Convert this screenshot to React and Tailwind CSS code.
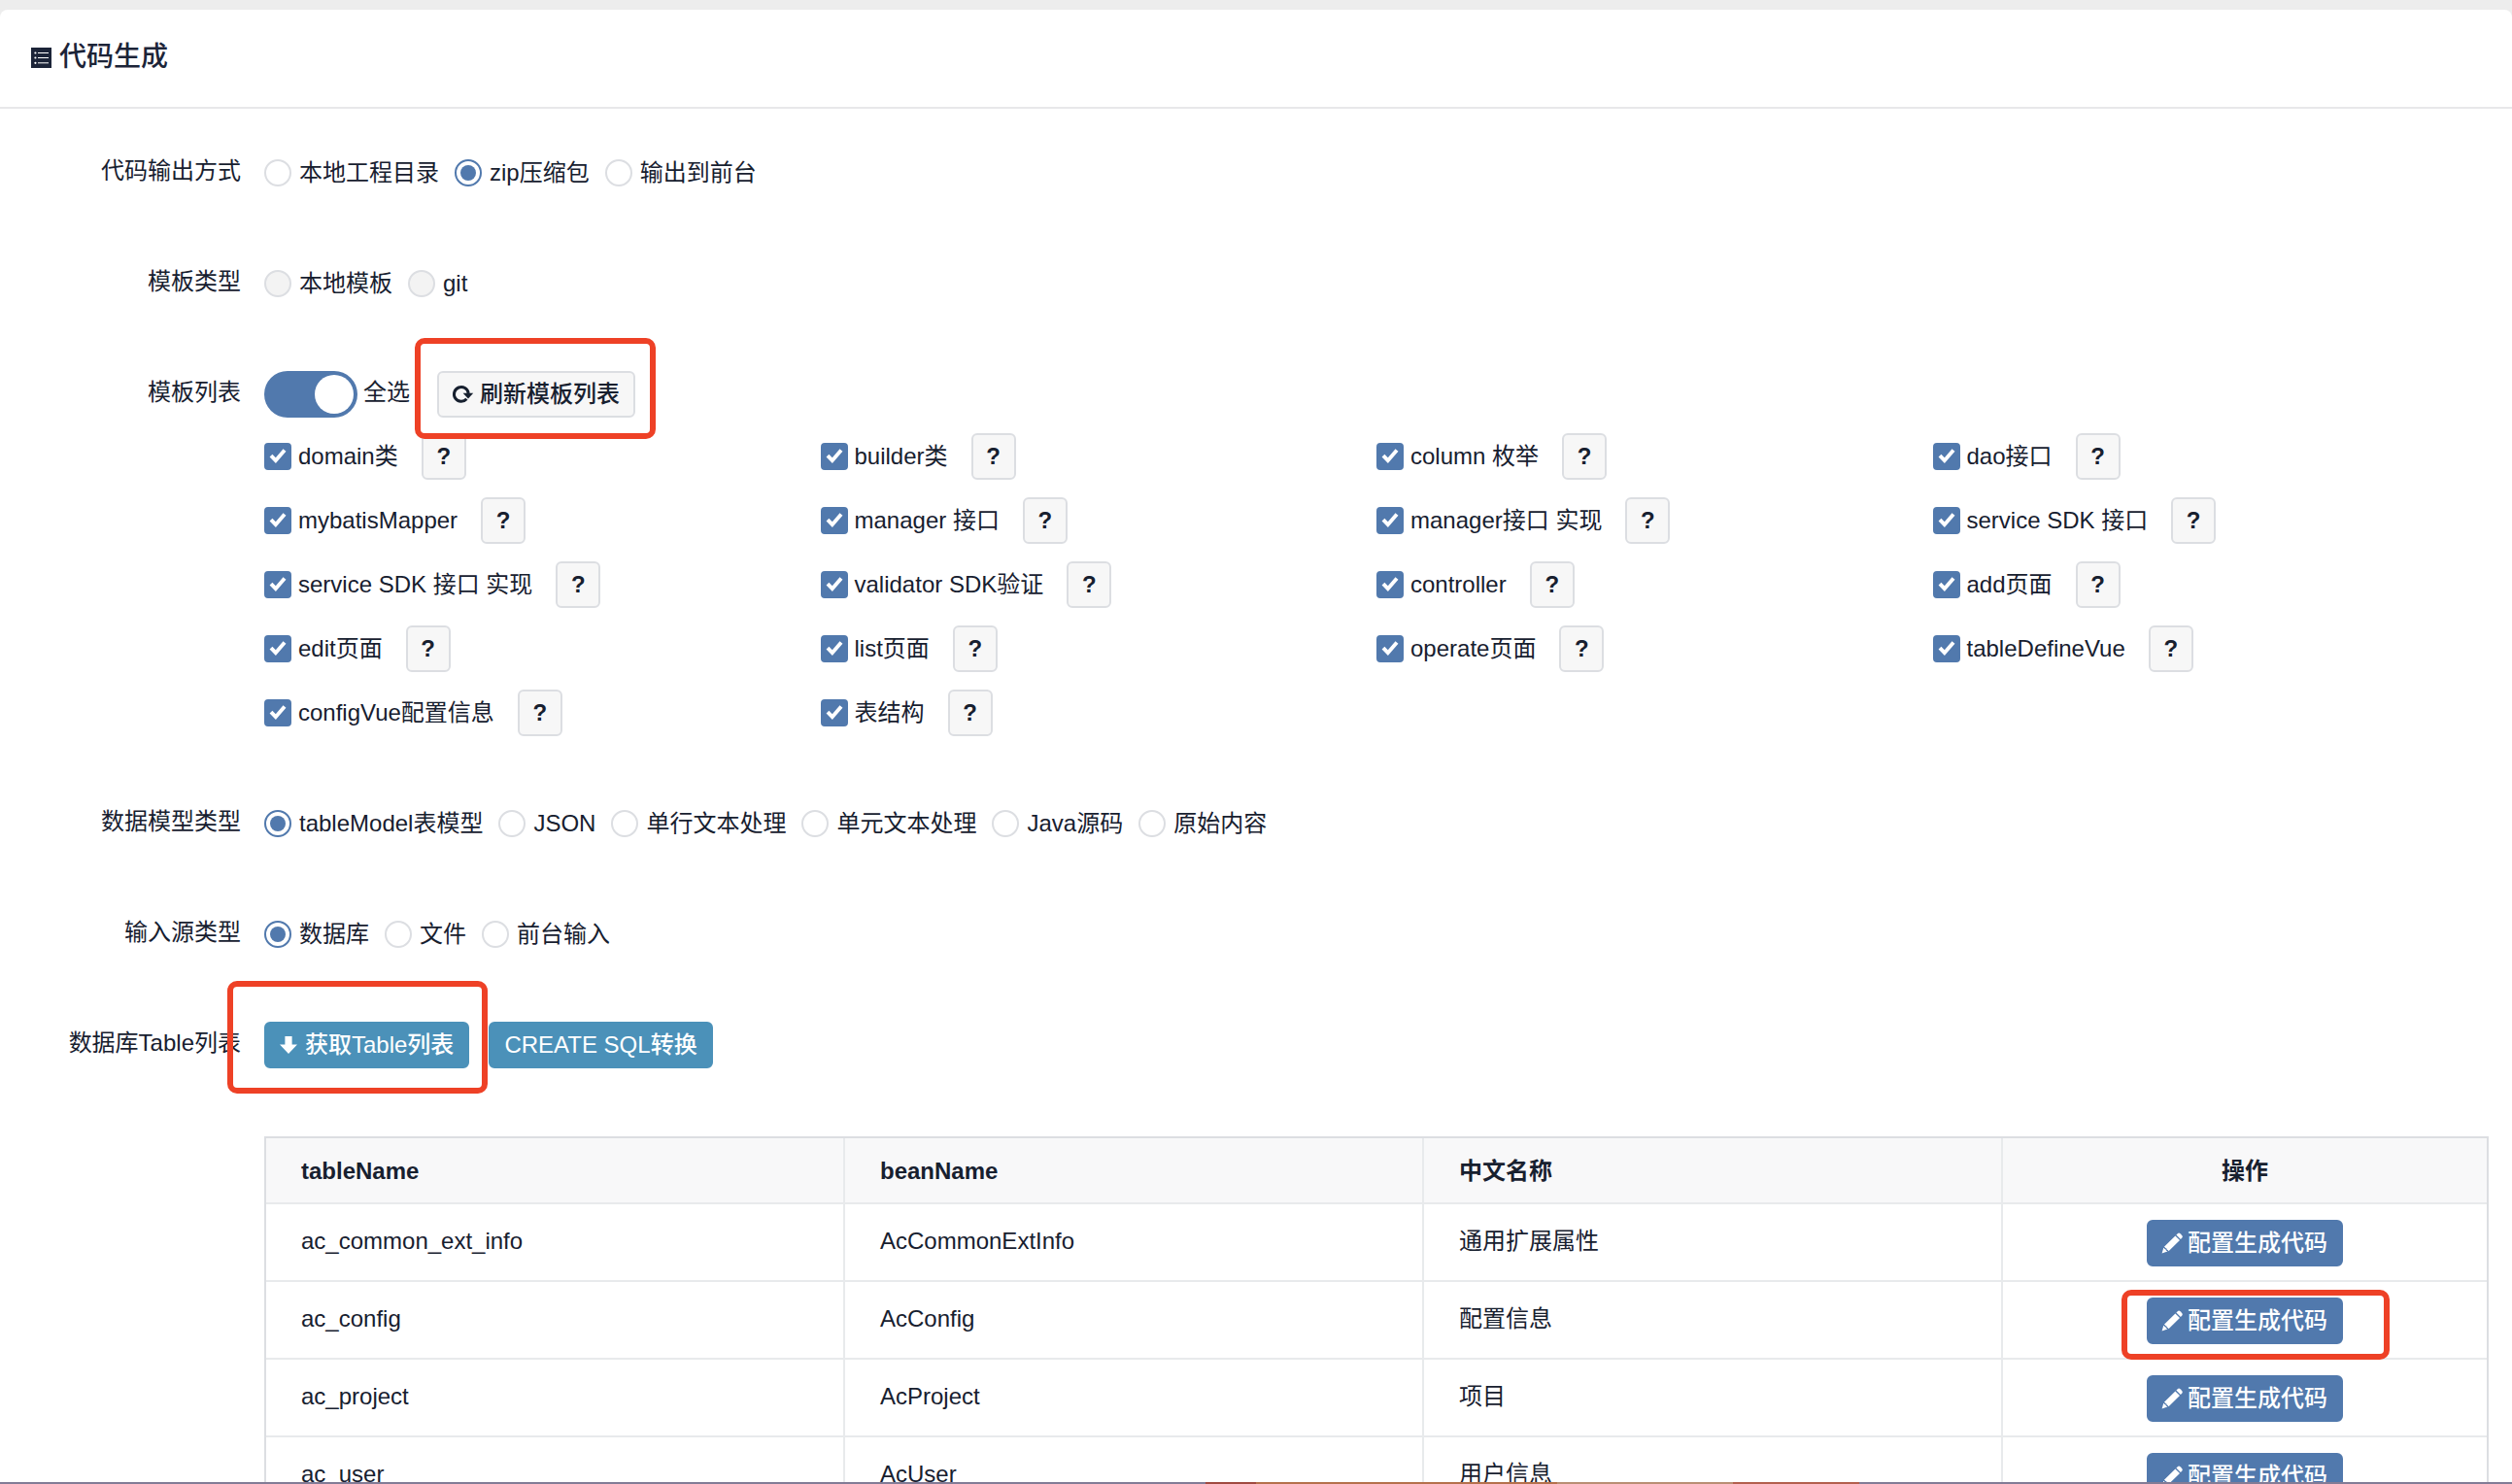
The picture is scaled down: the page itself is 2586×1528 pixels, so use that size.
import clsx from "clsx";

const templates = [
  "domain类",
  "builder类",
  "column 枚举",
  "dao接口",
  "mybatisMapper",
  "manager 接口",
  "manager接口 实现",
  "service SDK 接口",
  "service SDK 接口 实现",
  "validator SDK验证",
  "controller",
  "add页面",
  "edit页面",
  "list页面",
  "operate页面",
  "tableDefineVue",
  "configVue配置信息",
  "表结构",
];

const tables = [
  { tableName: "ac_common_ext_info", beanName: "AcCommonExtInfo", title: "通用扩展属性" },
  { tableName: "ac_config", beanName: "AcConfig", title: "配置信息", marked: true },
  { tableName: "ac_project", beanName: "AcProject", title: "项目" },
  { tableName: "ac_user", beanName: "AcUser", title: "用户信息" },
];

function ListBoxIcon() {
  return (
    <svg viewBox="0 0 21 21" className="size-[21px]" aria-hidden="true">
      <rect width="21" height="21" fill="#1c2438" />
      <g fill="#fff">
        <circle cx="4.4" cy="5.5" r="1.1" />
        <circle cx="4.4" cy="10.5" r="1.1" />
        <circle cx="4.4" cy="15.8" r="1.1" />
        <rect x="7" y="5" width="11" height="1" />
        <rect x="7" y="10" width="11" height="1" />
        <rect x="7" y="15.3" width="11" height="1" />
      </g>
    </svg>
  );
}

function RefreshIcon() {
  return (
    <svg viewBox="0 0 20 20" className="size-5 overflow-visible" aria-hidden="true">
      <path d="M14.4 14.8A7.4 7.4 0 1 1 16.2 9" fill="none" stroke="currentColor" strokeWidth="3" />
      <path d="M10.6 8.8H21.2L16 14.6z" fill="currentColor" />
    </svg>
  );
}

function ArrowDownIcon() {
  return (
    <svg viewBox="0 0 20 20" className="size-5" aria-hidden="true">
      <path d="M5.4 1h7.2v8.6H18L9 19 0 9.6h5.4z" fill="currentColor" />
    </svg>
  );
}

function PencilIcon() {
  return (
    <svg viewBox="0 0 20 20" className="size-5 overflow-visible" aria-hidden="true">
      <path d="M15.8.2q1.3-1.2 2.700.1l1.700 1.700q1.200 1.300.1 2.500l-1.400 1.400-4.500-4.300z" fill="currentColor" />
      <path d="M13.400 2.500l4.600 4.400L6.500 18.200q-.4-1.300-1.700-1.400 0-1.700-1.600-1.800-.2-1.100-1.300-1.300z" fill="currentColor" />
      <path d="M1.300 14.800q.9.2 1.100 1.200 1.600.1 1.600 1.700 1 .1 1.400.9L-.4 20.500z" fill="currentColor" />
    </svg>
  );
}

// Red outline drawn over the control that the guide points to
function Marker({ className }) {
  return (
    <span
      aria-hidden="true"
      className={clsx("pointer-events-none absolute z-10 rounded-[10px] border-6 border-[#ee4126]", className)}
    />
  );
}

function Button({ variant = "default", className, children }) {
  return (
    <button
      type="button"
      className={clsx(
        "inline-flex h-12 items-center justify-center rounded-md border-2 whitespace-nowrap",
        variant === "default" && "gap-2 border-[#dcdee2] bg-[#f7f7f7]",
        variant === "primary" && "gap-1.5 border-[#5179ad] bg-[#5179ad] text-white",
        variant === "info" && "gap-1.5 border-[#4b91b9] bg-[#4b91b9] text-white",
        className ?? "px-3.5 font-medium"
      )}
    >
      {children}
    </button>
  );
}

function FormRow({ label, children }) {
  return (
    <div className="mb-12 flex">
      <div className="flex h-[66px] w-[272px] shrink-0 items-center justify-end pr-6 pb-1">{label}</div>
      <div className="min-w-0 flex-1">{children}</div>
    </div>
  );
}

function RadioGroup({ label, name, options, selected, disabled }) {
  return (
    <FormRow label={label}>
      <div role="radiogroup" aria-label={label} className="flex h-[66px] items-center gap-4">
        {options.map((option) => (
          <label key={option} className="flex items-center gap-2">
            <input
              type="radio"
              name={name}
              defaultChecked={option === selected}
              disabled={disabled}
              className="size-7 appearance-none rounded-full border-2 border-[#dcdee2] checked:border-[#5179ad] checked:bg-[#5179ad] checked:bg-clip-content checked:p-1 disabled:bg-[#f3f3f3]"
            />
            {option}
          </label>
        ))}
      </div>
    </FormRow>
  );
}

function TemplateItem({ name }) {
  return (
    <div className="flex h-[66px] items-center gap-6">
      <label className="flex items-center gap-[7px]">
        <span className="grid shrink-0 place-items-center">
          <input
            type="checkbox"
            defaultChecked
            className="peer col-start-1 row-start-1 size-7 appearance-none rounded-sm border-2 border-[#dcdee2] checked:border-[#5179ad] checked:bg-[#5179ad]"
          />
          <svg
            viewBox="0 0 28 28"
            className="pointer-events-none invisible col-start-1 row-start-1 size-7 peer-checked:visible"
            aria-hidden="true"
          >
            <path d="M7 13.200l4.800 5L21 7.500" fill="none" stroke="#fff" strokeWidth="3.900" />
          </svg>
        </span>
        {name}
      </label>
      <Button className="w-[46px] font-bold">?</Button>
    </div>
  );
}

function BeanTable() {
  const cell = "border-r-2 border-b-2 border-[#e8eaec] px-9 text-left";
  const lastCell = "border-b-2 border-[#e8eaec] pt-0.5 text-center";

  return (
    <table className="w-full table-fixed border-separate border-spacing-0 border-2 border-[#dcdee2]">
      <thead>
        <tr className="h-[68px] bg-[#f8f8f9]">
          <th className={clsx(cell, "pt-0.5")}>tableName</th>
          <th className={clsx(cell, "pt-0.5")}>beanName</th>
          <th className={clsx(cell, "pt-0.5")}>中文名称</th>
          <th className={clsx(lastCell, "w-[498px]")}>操作</th>
        </tr>
      </thead>
      <tbody>
        {tables.map((row) => (
          <tr key={row.tableName} className="h-20">
            <td className={clsx(cell, "pb-0.5")}>{row.tableName}</td>
            <td className={clsx(cell, "pb-0.5")}>{row.beanName}</td>
            <td className={clsx(cell, "pb-0.5")}>{row.title}</td>
            <td className={lastCell}>
              <span className="relative inline-flex align-middle">
                <Button variant="primary">
                  <PencilIcon />
                  配置生成代码
                </Button>
                {row.marked ? <Marker className="-top-2 -right-12 -bottom-4 -left-[26px]" /> : null}
              </span>
            </td>
          </tr>
        ))}
      </tbody>
    </table>
  );
}

export default function App() {
  return (
    <div className="flex h-screen flex-col overflow-hidden bg-[#ededed] pt-2.5 font-['Liberation_Sans','Noto_Sans_CJK_SC',sans-serif] text-2xl text-[#17202f]">
      <main className="min-h-0 flex-1 overflow-hidden rounded-t-lg bg-white">
        <header className="flex h-[102px] items-center gap-2 border-b-2 border-[#e8e8ea] px-8 pb-0.5">
          <ListBoxIcon />
          <h1 className="text-[28px] font-medium text-[#1c2438]">代码生成</h1>
        </header>

        <form className="pt-[33px] pr-6">
          <RadioGroup
            label="代码输出方式"
            name="output"
            options={["本地工程目录", "zip压缩包", "输出到前台"]}
            selected="zip压缩包"
          />
          <RadioGroup label="模板类型" name="templateType" options={["本地模板", "git"]} disabled />

          <FormRow label="模板列表">
            <div className="flex h-[66px] items-center gap-7">
              <label className="flex items-center gap-1.5">
                <span className="grid items-center">
                  <input
                    type="checkbox"
                    role="switch"
                    defaultChecked
                    className="peer col-start-1 row-start-1 h-12 w-24 appearance-none rounded-full bg-[#c5c8ce] checked:bg-[#5179ad]"
                  />
                  <span className="pointer-events-none col-start-1 row-start-1 mx-1 size-10 rounded-full bg-white peer-checked:justify-self-end" />
                </span>
                <span className="pb-1">全选</span>
              </label>
              <span className="relative inline-flex">
                <Button>
                  <RefreshIcon />
                  刷新模板列表
                </Button>
                <Marker className="-top-[34px] -right-[21px] -bottom-[22px] -left-[23px]" />
              </span>
            </div>
            <div className="-mt-0.5 grid grid-cols-4">
              {templates.map((name) => (
                <TemplateItem key={name} name={name} />
              ))}
            </div>
          </FormRow>

          <RadioGroup
            label="数据模型类型"
            name="model"
            options={["tableModel表模型", "JSON", "单行文本处理", "单元文本处理", "Java源码", "原始内容"]}
            selected="tableModel表模型"
          />
          <RadioGroup label="输入源类型" name="source" options={["数据库", "文件", "前台输入"]} selected="数据库" />

          <FormRow label="数据库Table列表">
            <div className="mb-[61px] flex h-[66px] items-center gap-5">
              <span className="relative inline-flex">
                <Button variant="info">
                  <ArrowDownIcon />
                  获取Table列表
                </Button>
                <Marker className="-top-[42px] -right-[19px] -bottom-[26px] -left-[38px]" />
              </span>
              <Button variant="info">CREATE SQL转换</Button>
            </div>
            <BeanTable />
          </FormRow>
        </form>
      </main>

      {/* sliver of the desktop under the window */}
      <div className="flex h-0.5 shrink-0 bg-[#827c96]" aria-hidden="true">
        <div className="w-[48%]" />
        <div className="w-[2%] bg-[#a04a40]" />
        <div className="w-[12%] bg-[#b5714c]" />
        <div className="w-[7%] bg-[#b98f74]" />
        <div className="w-[5%] bg-[#b3604e]" />
      </div>
    </div>
  );
}
